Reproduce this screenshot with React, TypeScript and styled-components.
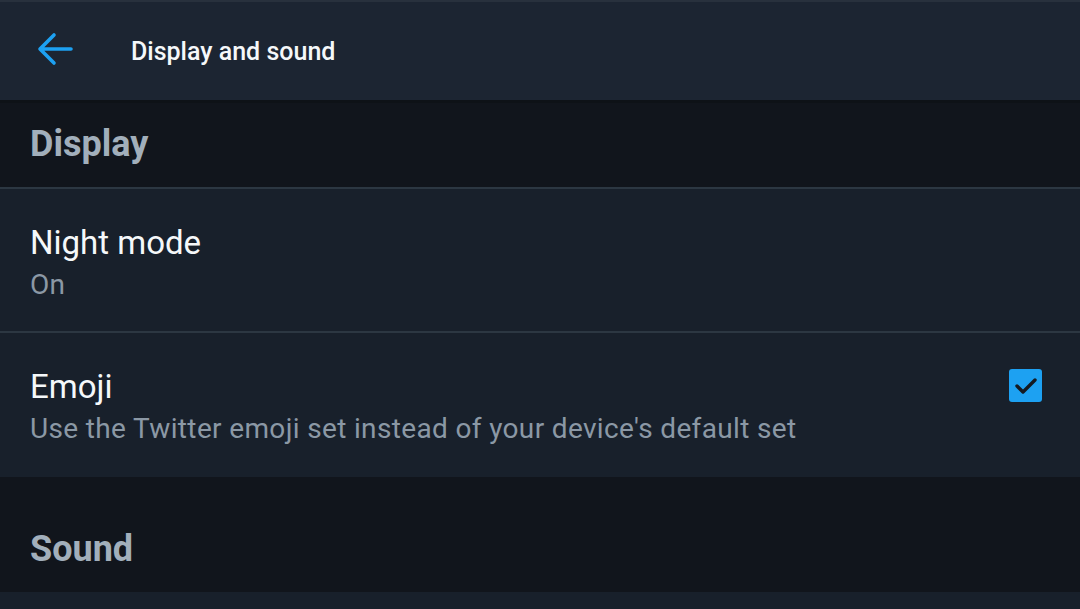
import React from "react";
import styled, { createGlobalStyle } from "styled-components";

const Global = createGlobalStyle`
  html, body { margin: 0; padding: 0; background: #18202b; }
  body { font-family: Roboto, "Noto Sans", Arial, sans-serif; -webkit-font-smoothing: antialiased; }
  * { box-sizing: border-box; }
`;

const Page = styled.div`
  width: 1080px;
  height: 609px;
  overflow: hidden;
  background: #18202b;
  display: flex;
  flex-direction: column;
`;

const Header = styled.header`
  height: 103px;
  flex: none;
  display: flex;
  align-items: center;
  background: #1c2532;
  border-top: 2px solid #28313d;
  border-bottom: 3px solid #0e1217;
  padding-left: 37px;
`;

const BackButton = styled.button`
  width: 36px;
  height: 34px;
  padding: 0;
  border: 0;
  background: none;
  display: flex;
  align-items: center;
  justify-content: center;
  margin-right: 58px;
  margin-top: -4px;
`;

const Title = styled.h1`
  margin: 0;
  font-size: 25px;
  font-weight: 500;
  color: #f5f8fa;
`;

const Section = styled.div<{ $top: number; $height: number }>`
  height: ${(p) => p.$height}px;
  flex: none;
  background: #11151c;
  padding: ${(p) => p.$top}px 30px 0;
`;

const SectionTitle = styled.h2`
  margin: 0;
  font-size: 36px;
  line-height: 40px;
  font-weight: 700;
  color: #a2afbb;
`;

const Divider = styled.div`
  height: 2px;
  flex: none;
  background: #2c3742;
`;

const Row = styled.div<{ $height: number }>`
  height: ${(p) => p.$height}px;
  flex: none;
  display: flex;
  align-items: flex-start;
  justify-content: space-between;
  padding: 35px 38px 0 30px;
  background: #18202b;
`;

const RowText = styled.div`
  display: flex;
  flex-direction: column;
`;

const RowTitle = styled.div`
  font-size: 33px;
  line-height: 38px;
  color: #f5f8fa;
`;

const RowSub = styled.div`
  margin-top: 7px;
  font-size: 28px;
  line-height: 32px;
  letter-spacing: 0.35px;
  color: #8b98a5;
`;

const Check = styled.div`
  width: 33px;
  height: 33px;
  margin-top: 1px;
  border-radius: 3px;
  background: #1da1f2;
  display: flex;
  align-items: center;
  justify-content: center;
`;

const Rest = styled.div`
  flex: 1;
  background: #18202b;
`;

export default function App() {
  return (
    <>
      <Global />
      <Page>
        <Header>
          <BackButton aria-label="Back">
            <svg width="36" height="34" viewBox="0 0 36 34" fill="none">
              <path
                d="M34 17H4M17 3L3 17l14 14"
                stroke="#1da1f2"
                strokeWidth="3.6"
                strokeLinecap="round"
                strokeLinejoin="round"
              />
            </svg>
          </BackButton>
          <Title>Display and sound</Title>
        </Header>
        <Section $top={21} $height={84}>
          <SectionTitle>Display</SectionTitle>
        </Section>
        <Divider />
        <Row $height={142}>
          <RowText>
            <RowTitle>Night mode</RowTitle>
            <RowSub>On</RowSub>
          </RowText>
        </Row>
        <Divider />
        <Row $height={144}>
          <RowText>
            <RowTitle>Emoji</RowTitle>
            <RowSub>Use the Twitter emoji set instead of your device's default set</RowSub>
          </RowText>
          <Check>
            <svg width="33" height="33" viewBox="0 0 33 33" fill="none">
              <path
                d="M8 17l6 6L26 11"
                stroke="#141a22"
                strokeWidth="3.4"
                strokeLinecap="round"
                strokeLinejoin="round"
              />
            </svg>
          </Check>
        </Row>
        <Section $top={52} $height={115}>
          <SectionTitle>Sound</SectionTitle>
        </Section>
        <Rest />
      </Page>
    </>
  );
}
